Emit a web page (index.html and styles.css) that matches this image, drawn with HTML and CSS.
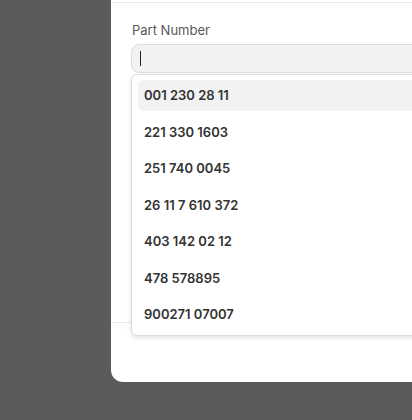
FILE: index.html
```html
<!DOCTYPE html>
<html lang="en">
<head>
<meta charset="utf-8">
<title>Part Number</title>
<link rel="stylesheet" href="styles.css">
</head>
<body>
<div class="backdrop">
  <div class="modal">
    <div class="modal-header"></div>
    <div class="modal-body">
      <label class="field-label">Part Number</label>
      <div class="combo">
        <div class="input"><span class="caret"></span></div>
        <ul class="menu">
          <li class="option active">001 230 28 11</li>
          <li class="option">221 330 1603</li>
          <li class="option">251 740 0045</li>
          <li class="option">26 11 7 610 372</li>
          <li class="option">403 142 02 12</li>
          <li class="option">478 578895</li>
          <li class="option">900271 07007</li>
        </ul>
      </div>
    </div>
    <div class="modal-footer"></div>
  </div>
</div>
</body>
</html>
```
FILE: styles.css
```css
html, body {
  margin: 0;
  padding: 0;
}
body {
  background: #5b5b5b;
  height: 420px;
  overflow: hidden;
  font-family: Inter, "Noto Sans", "Liberation Sans", sans-serif;
}
.backdrop {
  padding-left: 111px;
}
.modal {
  width: 301px;
  margin-top: -40px;
  background: #ffffff;
  border-radius: 0 0 0 12px;
  overflow: hidden;
}
.modal-header {
  height: 42px;
  border-bottom: 1px solid #e9e9e9;
  margin-left: 1px;
}
.modal-body {
  box-sizing: border-box;
  height: 319px;
  padding: 19px 0 0 20px;
}
.field-label {
  display: block;
  font-size: 13px;
  line-height: 16px;
  color: #585858;
  padding-left: 1px;
}
.combo {
  position: relative;
  margin-top: 6px;
}
.input {
  box-sizing: border-box;
  height: 29px;
  width: 320px;
  background: #f2f2f2;
  border: 1px solid #dcdcdc;
  border-radius: 8px;
  padding: 4px 8px;
  display: flex;
  align-items: center;
}
.caret {
  display: block;
  width: 1px;
  height: 15px;
  background: #222222;
}
.menu {
  position: absolute;
  top: 30px;
  left: 0;
  box-sizing: border-box;
  width: 320px;
  margin: 0;
  padding: 5px 6px;
  list-style: none;
  background: #ffffff;
  border: 1px solid #dcdcdc;
  border-radius: 6px;
  box-shadow: 0 2px 4px rgba(0, 0, 0, 0.12);
  display: flex;
  flex-direction: column;
  gap: 5.5px;
}
.option {
  height: 31px;
  line-height: 31px;
  padding: 0 6px;
  font-size: 13px;
  font-weight: 600;
  color: #333333;
  border-radius: 6px;
}
.option.active {
  background: #f2f2f2;
}
.modal-footer {
  box-sizing: border-box;
  height: 60px;
  border-top: 1px solid #e9e9e9;
}
```
